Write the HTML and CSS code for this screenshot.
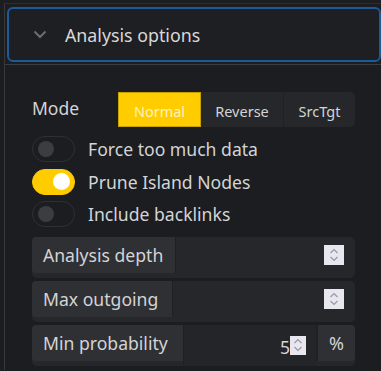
FILE: index.html
```html
<!DOCTYPE html>
<html lang="en">
<head>
    <meta charset="UTF-8">
    <meta name="viewport" content="width=device-width, initial-scale=1.0">
    <title>Analysis options</title>
    <link rel="stylesheet" href="styles.css">
</head>
<body>

    <div class="panel">
        <!-- Cabeçalho -->
        <div class="header-wrap">
            <div class="header">
                <svg class="chevron" width="14" height="9" viewBox="0 0 14 9">
                    <path d="M1.5 1.5 L7 7 L12.5 1.5" fill="none" stroke="#6b6d72" stroke-width="2"/>
                </svg>
                <span class="header-title">Analysis options</span>
            </div>
        </div>

        <div class="content">
            <!-- Modo -->
            <div class="mode-row">
                <span class="mode-label">Mode</span>
                <div class="btn-group">
                    <button class="btn active">Normal</button>
                    <button class="btn">Reverse</button>
                    <button class="btn last">SrcTgt</button>
                </div>
            </div>

            <!-- Toggles -->
            <div class="toggles">
                <div class="toggle-row">
                    <span class="toggle"><span class="knob"></span></span>
                    <span class="toggle-label">Force too much data</span>
                </div>
                <div class="toggle-row">
                    <span class="toggle on"><span class="knob"></span></span>
                    <span class="toggle-label">Prune Island Nodes</span>
                </div>
                <div class="toggle-row">
                    <span class="toggle"><span class="knob"></span></span>
                    <span class="toggle-label">Include backlinks</span>
                </div>
            </div>

            <!-- Campos -->
            <div class="fields">
                <div class="field">
                    <span class="field-label w1">Analysis depth</span>
                    <span class="field-input">
                        <span class="spin">
                            <svg width="12" height="16" viewBox="0 0 12 16">
                                <path d="M2.5 6 L6 2.5 L9.5 6 M2.5 10 L6 13.5 L9.5 10" fill="none" stroke="#9a98a4" stroke-width="1.2"/>
                            </svg>
                        </span>
                    </span>
                </div>
                <div class="field">
                    <span class="field-label w2">Max outgoing</span>
                    <span class="field-input">
                        <span class="spin">
                            <svg width="12" height="16" viewBox="0 0 12 16">
                                <path d="M2.5 6 L6 2.5 L9.5 6 M2.5 10 L6 13.5 L9.5 10" fill="none" stroke="#9a98a4" stroke-width="1.2"/>
                            </svg>
                        </span>
                    </span>
                </div>
                <div class="field">
                    <span class="field-label w3">Min probability</span>
                    <span class="field-input short">
                        <span class="value">5</span>
                        <span class="spin small">
                            <svg width="12" height="16" viewBox="0 0 12 16">
                                <path d="M2.5 6 L6 2.5 L9.5 6 M2.5 10 L6 13.5 L9.5 10" fill="none" stroke="#9a98a4" stroke-width="1.2"/>
                            </svg>
                        </span>
                    </span>
                    <span class="field-unit">%</span>
                </div>
            </div>
        </div>
    </div>

</body>
</html>
```

FILE: styles.css
```css
body {
    font-family: 'Noto Sans', 'Open Sans', sans-serif;
    background-color: #1b1d20;
    color: #d4d4d6;
    margin: 0;
    height: 371px;
    overflow: hidden;
}
.panel {
    margin: 3px 0 0 4px;
    border-top: 1px solid #2b2d31;
    border-left: 1px solid #36383c;
    height: 367px;
    box-sizing: border-box;
    overflow: hidden;
}
.header-wrap {
    padding: 3px 0 2px 2px;
    border-bottom: 1px solid #3a3c40;
}
.header {
    height: 51px;
    border: 2px solid #1c5a9a;
    border-radius: 6px;
    background-color: #1e1f22;
    display: flex;
    align-items: center;
}
.chevron {
    margin-left: 24px;
    margin-right: 18px;
}
.header-title {
    font-size: 17.8px;
    color: #d8d8da;
}
.content {
    padding: 27px 0 0 27px;
    width: 323px;
}
.mode-row {
    display: flex;
    align-items: center;
    height: 35px;
}
.mode-label {
    width: 86px;
    font-size: 17.5px;
    margin-top: -3px;
}
.btn-group {
    display: flex;
    background-color: #25272a;
    border-radius: 0 5px 5px 0;
    height: 35px;
}
.btn {
    font-family: inherit;
    font-size: 14.5px;
    color: #d4d4d6;
    background: none;
    border: none;
    border-right: 1px solid #1e2023;
    padding: 2px 0 0;
    height: 35px;
    width: 83px;
}
.btn.active {
    background-color: #ffcc00;
    border: 1px solid #c9a200;
    color: #fff3c0;
}
.btn.last {
    border-right: none;
    width: 71px;
}
.toggles {
    padding-top: 6px;
}
.toggle-row {
    display: flex;
    align-items: center;
    height: 32.5px;
}
.toggle {
    height: 24px;
    width: 32px;
    border: 1px solid #2e3034;
    border-radius: 13px;
    display: flex;
    align-items: center;
    padding: 0 4px 0 5px;
}
.toggle.on {
    background-color: #ffcc00;
    border-color: #ffcc00;
    justify-content: flex-end;
}
.knob {
    width: 16px;
    height: 16px;
    border-radius: 50%;
    background-color: #3b3d41;
}
.toggle.on .knob {
    background-color: #ffffff;
    width: 17px;
    height: 17px;
}
.toggle-label {
    margin-left: 13px;
    font-size: 17.6px;
}
.fields {
    padding-top: 6px;
}
.field {
    display: flex;
    height: 41px;
    margin-bottom: 3px;
    background-color: #25272a;
    border-radius: 5px;
}
.field-label {
    display: flex;
    align-items: center;
    background-color: #2e3034;
    border-radius: 4px 0 0 4px;
    height: 36px;
    padding-left: 11px;
    font-size: 17.6px;
    box-sizing: border-box;
}
.w1 { width: 143px; }
.w2 { width: 140px; }
.w3 { width: 151px; }
.field-input {
    flex: 1;
    display: flex;
    align-items: center;
    justify-content: flex-end;
    padding-right: 11px;
    height: 36px;
    border-left: 1px solid #1e2023;
}
.field-input.short {
    background-color: #232528;
    height: 41px;
    align-items: flex-start;
    padding-right: 10px;
    padding-top: 11px;
    box-sizing: border-box;
}
.value {
    font-size: 17.6px;
    line-height: 19px;
    margin-top: 2px;
}
.spin {
    width: 20px;
    height: 20px;
    background-color: #e8e6ee;
    display: flex;
    align-items: center;
    justify-content: center;
}
.spin.small {
    width: 16px;
    height: 19px;
}
.field-unit {
    width: 37px;
    display: flex;
    align-items: center;
    justify-content: center;
    background-color: #2e3034;
    border-left: 2px solid #1e2023;
    border-radius: 0 4px 4px 0;
    height: 36px;
    font-size: 18px;
}
```
